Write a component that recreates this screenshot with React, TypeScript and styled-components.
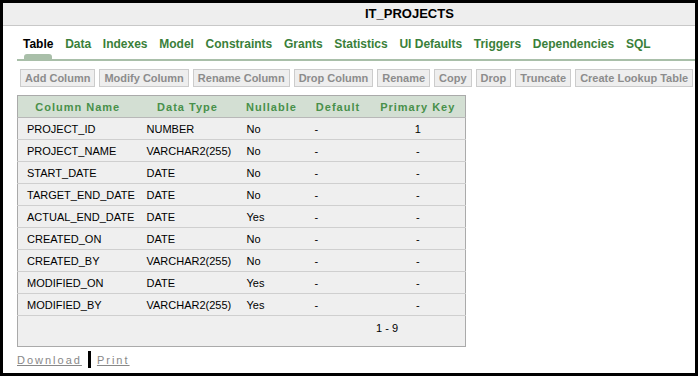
import styled, { createGlobalStyle, css } from "styled-components";

const GlobalStyle = createGlobalStyle`
  html, body {
    margin: 0;
    padding: 0;
    background: #ffffff;
  }
  body {
    font-family: "Liberation Sans", Arial, sans-serif;
  }
`;

const Frame = styled.div`
  box-sizing: border-box;
  width: 698px;
  height: 376px;
  border: 3px solid #000000;
  background: #ffffff;
  overflow: hidden;
`;

const TitleBar = styled.div`
  height: 22px;
  line-height: 22px;
  background: #eeeeee;
  border-bottom: 1px solid #c8c8c8;
  padding-left: 362px;
  font-size: 13px;
  font-weight: 700;
  color: #000000;
`;

const Body = styled.div`
  padding: 0 0 0 14px;
`;

const TabList = styled.div`
  display: flex;
  gap: 11.7px;
  padding: 11px 0 0 6px;
  border-bottom: 2px solid #a9bfa9;
`;

const Tab = styled.div<{ $active?: boolean }>`
  position: relative;
  height: 22px;
  line-height: 14px;
  font-size: 12px;
  font-weight: 700;
  white-space: nowrap;
  color: ${(p) => (p.$active ? "#000000" : "#3a7f3a")};
  cursor: pointer;

  ${(p) =>
    p.$active &&
    css`
      &::after {
        content: "";
        position: absolute;
        left: 1px;
        right: 1px;
        bottom: 0;
        height: 5px;
        border-radius: 3px 3px 0 0;
        background: #a9bfa9;
      }
    `}
`;

const Toolbar = styled.div`
  display: flex;
  gap: 4px;
  padding: 8px 0 0 3px;
  white-space: nowrap;
`;

const ActionButton = styled.div`
  height: 16px;
  line-height: 16px;
  padding: 0 4px;
  border: 1px solid #cccccc;
  background: #eeeeee;
  color: #8c8c8c;
  font-size: 11px;
  font-weight: 700;
  flex: none;
`;

const Grid = styled.table`
  margin-top: 8px;
  width: 448px;
  table-layout: fixed;
  border-collapse: collapse;
  border: 1px solid #aaaaaa;
  font-size: 11px;
`;

const HeadCell = styled.th`
  height: 21px;
  padding: 0;
  background: #d3dfd3;
  color: #48904a;
  font-size: 11px;
  font-weight: 700;
  letter-spacing: 1px;
  text-align: center;
  border-bottom: 1px solid #b8b8b8;
`;

const Cell = styled.td<{ $center?: boolean }>`
  height: 21px;
  padding: 0 0 0 ${(p) => (p.$center ? "0" : "9px")};
  background: #efefef;
  color: #000000;
  text-align: ${(p) => (p.$center ? "center" : "left")};
  border-bottom: 1px solid #cfcfcf;
  white-space: nowrap;
`;

const PagerCell = styled.td`
  height: 24px;
  padding: 0 67px 6px 0;
  background: #efefef;
  color: #000000;
  text-align: right;
`;

const Links = styled.div`
  display: flex;
  align-items: center;
  gap: 6px;
  margin-top: 4px;
  height: 17px;
`;

const FooterLink = styled.a`
  font-size: 11px;
  letter-spacing: 2px;
  color: #888888;
  text-decoration: underline;
  cursor: pointer;
`;

const Divider = styled.span`
  width: 3px;
  height: 17px;
  background: #000000;
`;

const tabs = [
  "Table",
  "Data",
  "Indexes",
  "Model",
  "Constraints",
  "Grants",
  "Statistics",
  "UI Defaults",
  "Triggers",
  "Dependencies",
  "SQL",
];

const actions = [
  "Add Column",
  "Modify Column",
  "Rename Column",
  "Drop Column",
  "Rename",
  "Copy",
  "Drop",
  "Truncate",
  "Create Lookup Table",
];

type ColumnRow = {
  name: string;
  type: string;
  nullable: string;
  pk: string;
};

const columns: ColumnRow[] = [
  { name: "PROJECT_ID", type: "NUMBER", nullable: "No", pk: "1" },
  { name: "PROJECT_NAME", type: "VARCHAR2(255)", nullable: "No", pk: "-" },
  { name: "START_DATE", type: "DATE", nullable: "No", pk: "-" },
  { name: "TARGET_END_DATE", type: "DATE", nullable: "No", pk: "-" },
  { name: "ACTUAL_END_DATE", type: "DATE", nullable: "Yes", pk: "-" },
  { name: "CREATED_ON", type: "DATE", nullable: "No", pk: "-" },
  { name: "CREATED_BY", type: "VARCHAR2(255)", nullable: "No", pk: "-" },
  { name: "MODIFIED_ON", type: "DATE", nullable: "Yes", pk: "-" },
  { name: "MODIFIED_BY", type: "VARCHAR2(255)", nullable: "Yes", pk: "-" },
];

const App: React.FC = () => {
  return (
    <>
      <GlobalStyle />
      <Frame>
        <TitleBar>IT_PROJECTS</TitleBar>
        <Body>
          <TabList>
            {tabs.map((t, i) => (
              <Tab key={t} $active={i === 0}>
                {t}
              </Tab>
            ))}
          </TabList>
          <Toolbar>
            {actions.map((a) => (
              <ActionButton key={a}>{a}</ActionButton>
            ))}
          </Toolbar>
          <Grid>
            <colgroup>
              <col style={{ width: 120 }} />
              <col style={{ width: 100 }} />
              <col style={{ width: 68 }} />
              <col style={{ width: 65 }} />
              <col style={{ width: 95 }} />
            </colgroup>
            <thead>
              <tr>
                <HeadCell>Column Name</HeadCell>
                <HeadCell>Data Type</HeadCell>
                <HeadCell>Nullable</HeadCell>
                <HeadCell>Default</HeadCell>
                <HeadCell>Primary Key</HeadCell>
              </tr>
            </thead>
            <tbody>
              {columns.map((c) => (
                <tr key={c.name}>
                  <Cell>{c.name}</Cell>
                  <Cell>{c.type}</Cell>
                  <Cell>{c.nullable}</Cell>
                  <Cell>-</Cell>
                  <Cell $center>{c.pk}</Cell>
                </tr>
              ))}
              <tr>
                <PagerCell colSpan={5}>1 - 9</PagerCell>
              </tr>
            </tbody>
          </Grid>
          <Links>
            <FooterLink>Download</FooterLink>
            <Divider />
            <FooterLink>Print</FooterLink>
          </Links>
        </Body>
      </Frame>
    </>
  );
};

export default App;
